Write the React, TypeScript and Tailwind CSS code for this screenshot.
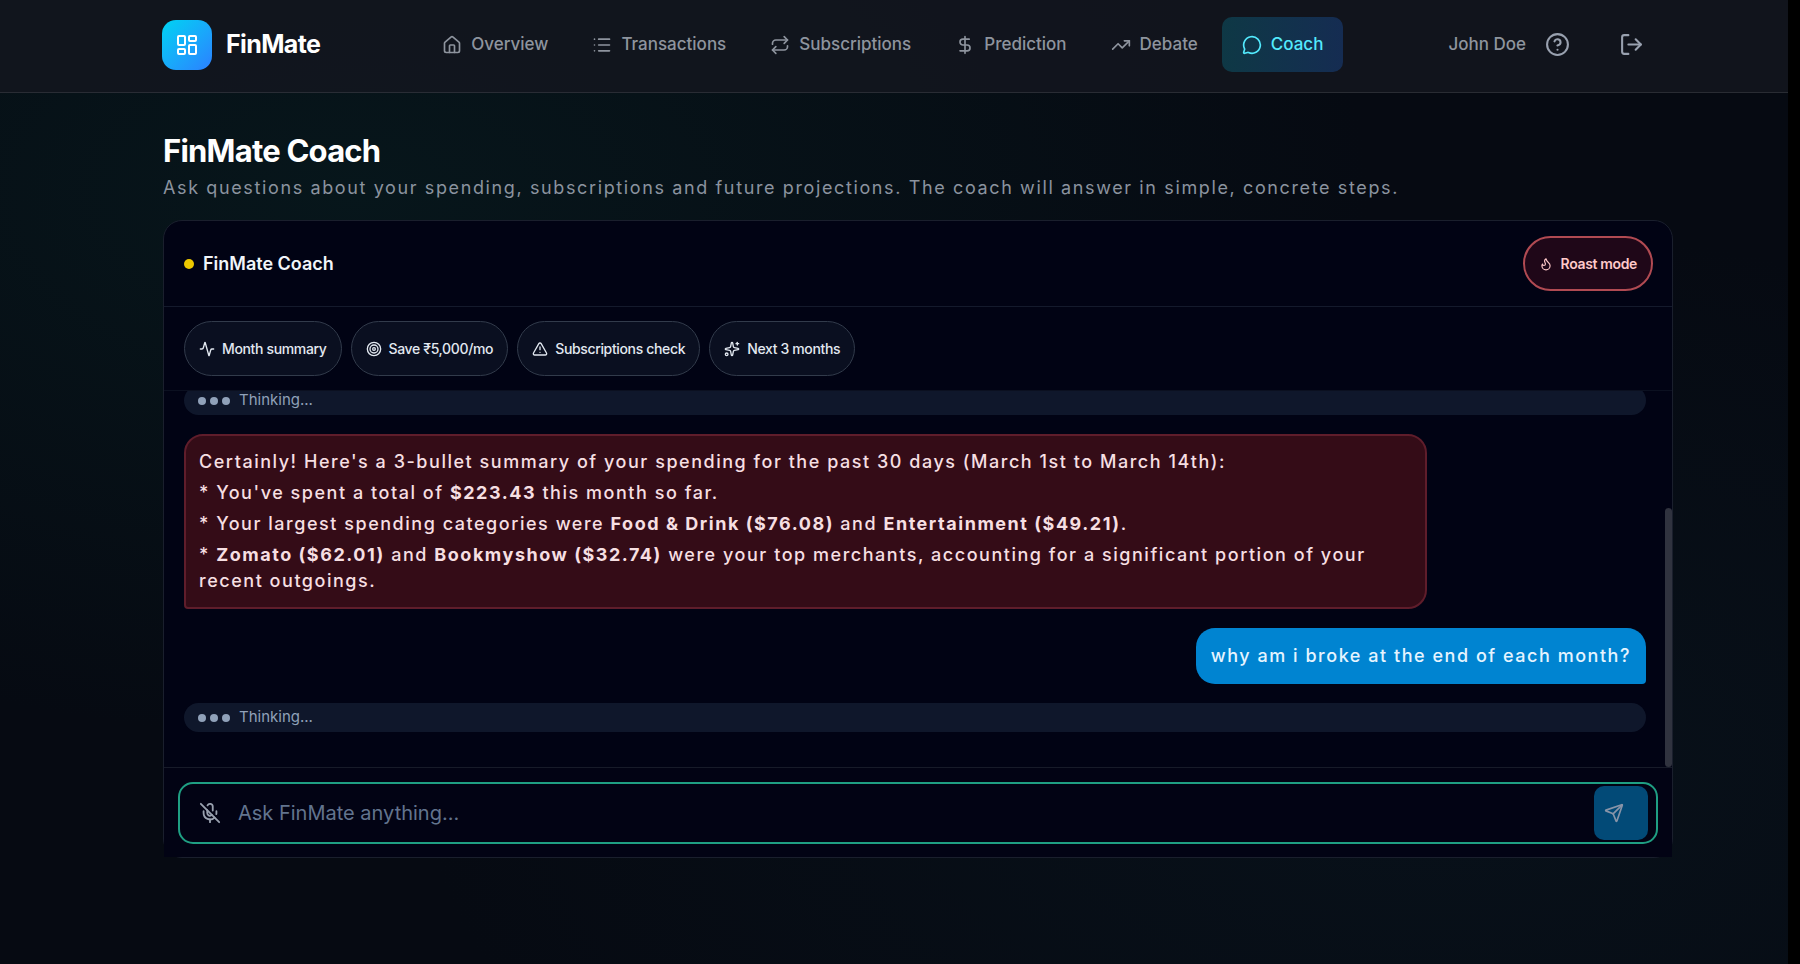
import React, { useState } from 'react';
import {
  Activity,
  AlertTriangle,
  CircleHelp,
  DollarSign,
  Flame,
  House,
  LayoutDashboard,
  List,
  LogOut,
  MessageCircle,
  MicOff,
  Repeat,
  Send,
  Sparkles,
  Target,
  TrendingUp,
} from 'lucide-react';

const navItems = [
  { label: 'Overview', icon: House },
  { label: 'Transactions', icon: List },
  { label: 'Subscriptions', icon: Repeat },
  { label: 'Prediction', icon: DollarSign },
  { label: 'Debate', icon: TrendingUp },
  { label: 'Coach', icon: MessageCircle, active: true },
];

const quickPrompts = [
  { label: 'Month summary', icon: Activity },
  { label: 'Save ₹5,000/mo', icon: Target },
  { label: 'Subscriptions check', icon: AlertTriangle },
  { label: 'Next 3 months', icon: Sparkles },
];

function Header() {
  return (
    <header className="h-[93px] border-b border-white/10 bg-[#14171f]/80 pr-[115px] pl-[162px]">
      <div className="flex h-[89px] items-center">
        <div className="flex items-center gap-3.5">
          <div className="flex h-[50px] w-[50px] items-center justify-center rounded-[14px] bg-gradient-to-br from-[#00d3f2] to-[#2b7fff]">
            <LayoutDashboard className="h-6 w-6 text-white" />
          </div>
          <span className="text-[25px] font-bold tracking-tight text-white">FinMate</span>
        </div>

        <nav className="ml-[102px] flex items-center gap-1">
          {navItems.map(({ label, icon: Icon, active }) => (
            <a
              key={label}
              href="#"
              className={
                active
                  ? 'flex h-[55px] items-center gap-[9px] rounded-[10px] bg-gradient-to-r from-[#0e3845] to-[#152c52] px-5 text-[17px] font-medium text-[#53eafd]'
                  : 'flex h-[55px] items-center gap-[9px] rounded-[10px] px-5 text-[17px] font-medium text-[#8e949e]'
              }
            >
              <Icon className="h-5 w-5" />
              {label}
            </a>
          ))}
        </nav>

        <div className="ml-auto flex items-center pr-[29px] text-[#99a1af]">
          <span className="text-[17px] font-medium text-[#8e949e]">John Doe</span>
          <button type="button" aria-label="Help" className="ml-[19px]">
            <CircleHelp className="h-[25px] w-[25px]" />
          </button>
          <button type="button" aria-label="Log out" className="ml-[49px]">
            <LogOut className="h-[25px] w-[25px]" />
          </button>
        </div>
      </div>
    </header>
  );
}

function Thinking() {
  return (
    <div className="flex h-[29px] shrink-0 items-center gap-[9px] rounded-full bg-[#0f172b] px-3.5 text-[15px] text-[#90a1b9]">
      <span className="flex gap-1">
        <span className="h-2 w-2 rounded-full bg-[#90a1b9]" />
        <span className="h-2 w-2 rounded-full bg-[#90a1b9]" />
        <span className="h-2 w-2 rounded-full bg-[#90a1b9]" />
      </span>
      Thinking...
    </div>
  );
}

export default function App() {
  const [message, setMessage] = useState('');

  return (
    <div className="min-h-screen bg-black pr-3 font-['Inter',sans-serif]">
      <div className="min-h-screen bg-[#060a12] bg-[radial-gradient(ellipse_at_20%_20%,#07161b_0%,transparent_50%),radial-gradient(ellipse_at_80%_80%,#08111a_0%,transparent_50%)]">
        <Header />

        <main className="pt-10 pr-[115px] pl-[163px]">
          <h1 className="text-[31px] leading-9 font-bold tracking-tight text-white">FinMate Coach</h1>
          <p className="mt-[5px] text-lg tracking-[0.09em] text-[#8b939f]">
            Ask questions about your spending, subscriptions and future projections. The coach will answer in
            simple, concrete steps.
          </p>

          <section className="mt-[18px] rounded-[19px] border border-[#1a1f2d] bg-[#010314]">
            <div className="flex items-center justify-between border-b border-[#141a2c] py-[15px] pr-[19px] pl-5">
              <div className="flex items-center gap-[9px]">
                <span className="h-2.5 w-2.5 rounded-full bg-[#ecc800]" />
                <h2 className="text-lg font-semibold text-slate-100">FinMate Coach</h2>
              </div>
              <button
                type="button"
                className="flex h-[55px] items-center gap-2 rounded-full border-2 border-[#b04a52] bg-[#1f0718] px-3.5 text-sm font-semibold tracking-tight text-[#ffc9c9]"
              >
                <Flame className="h-3.5 w-3.5" />
                Roast mode
              </button>
            </div>

            <div className="flex gap-[9px] border-b border-[#0b1020] py-3.5 pr-[19px] pl-5">
              {quickPrompts.map(({ label, icon: Icon }) => (
                <button
                  key={label}
                  type="button"
                  className="flex h-[55px] items-center gap-[7px] rounded-full border border-[#323b4b] bg-[#0a0f20] px-3.5 text-sm font-medium tracking-tight text-slate-200"
                >
                  <Icon className="h-4 w-4" />
                  {label}
                </button>
              ))}
            </div>

            <div className="relative">
              <div className="flex h-[376px] flex-col justify-end gap-[19px] overflow-hidden pr-[26px] pb-[35px] pl-5">
                <Thinking />

                <div className="max-w-[85%] space-y-[5px] self-start rounded-[19px] rounded-bl-[4px] border-2 border-[#5f1d2b] bg-[#340c17] px-[13px] py-[13px] text-lg leading-[26px] font-medium tracking-[0.085em] text-[#f6dfe2]">
                  <p>Certainly! Here's a 3-bullet summary of your spending for the past 30 days (March 1st to March 14th):</p>
                  <p>
                    * You've spent a total of <strong>$223.43</strong> this month so far.
                  </p>
                  <p>
                    * Your largest spending categories were <strong>Food &amp; Drink ($76.08)</strong> and{' '}
                    <strong>Entertainment ($49.21)</strong>.
                  </p>
                  <p>
                    * <strong>Zomato ($62.01)</strong> and <strong>Bookmyshow ($32.74)</strong> were your top
                    merchants, accounting for a significant portion of your recent outgoings.
                  </p>
                </div>

                <div className="self-end rounded-[19px] rounded-br-[4px] bg-[#0084d1] p-[15px] text-lg leading-[26px] font-medium tracking-[0.085em] text-[#e6f4ff]">
                  why am i broke at the end of each month?
                </div>

                <Thinking />
              </div>
              <div className="absolute right-0 bottom-0 h-[259px] w-[7px] rounded-full bg-[#30333f]" />
            </div>

            <form className="border-t border-[#171b29] bg-[#020314] px-3.5 pt-3.5 pb-[13px]" onSubmit={(e) => e.preventDefault()}>
              <div className="flex h-[62px] items-center rounded-[15px] border-2 border-[#1f9f83] pr-2 pl-[19px]">
                <button type="button" aria-label="Turn on microphone" className="text-[#99a1af]">
                  <MicOff className="h-[22px] w-[22px]" />
                </button>
                <input
                  type="text"
                  aria-label="Message"
                  placeholder="Ask FinMate anything..."
                  value={message}
                  onChange={(e) => setMessage(e.target.value)}
                  className="ml-[17px] min-w-0 flex-1 bg-transparent text-xl text-white outline-none placeholder:text-[#62748e]"
                />
                <button
                  type="submit"
                  aria-label="Send"
                  className="flex h-[54px] w-[54px] items-center rounded-[10px] bg-[#024a77] pl-2.5 text-[#8894a8]"
                >
                  <Send className="h-5 w-5" />
                </button>
              </div>
            </form>
          </section>
        </main>
      </div>
    </div>
  );
}
